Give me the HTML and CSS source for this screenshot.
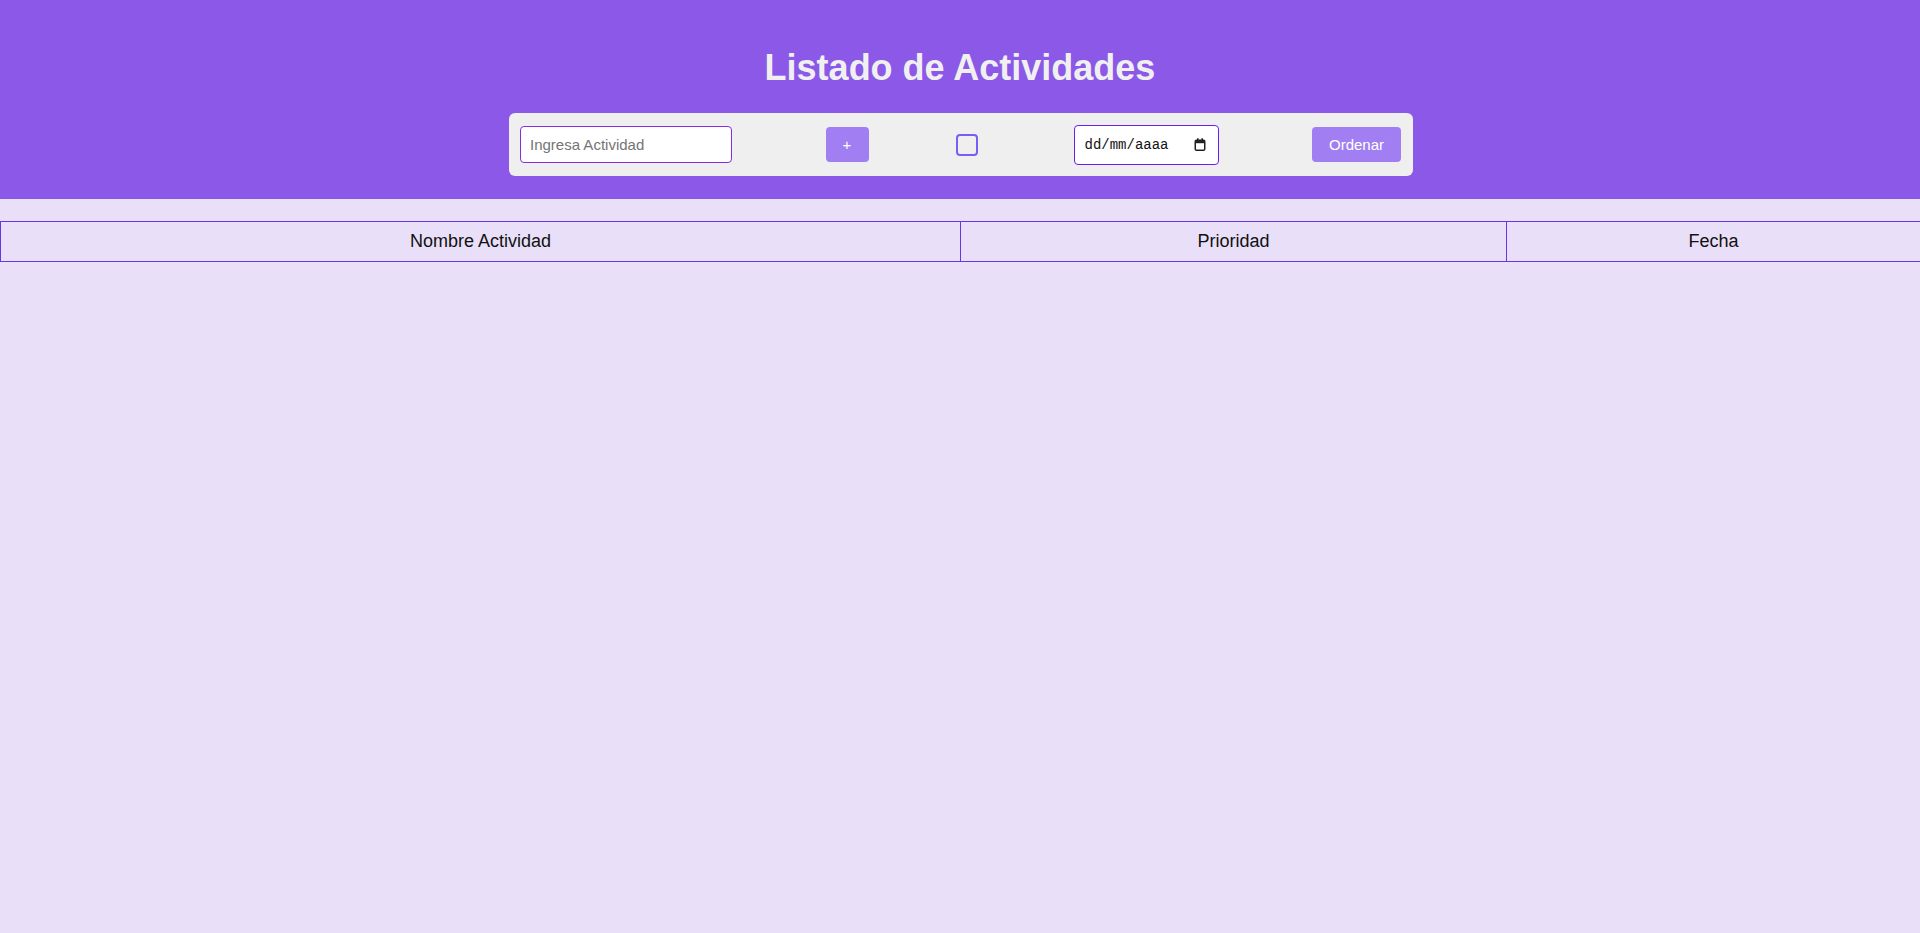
FILE: index.html
```html
<!DOCTYPE html>
<html lang="es">
<head>
<meta charset="utf-8">
<title>Listado de Actividades</title>
<link rel="stylesheet" href="styles.css">
</head>
<body>
<header class="header">
  <h1 class="title">Listado de Actividades</h1>
  <div class="toolbar">
    <input class="text-input" type="text" placeholder="Ingresa Actividad">
    <button class="btn btn-add" type="button">+</button>
    <input class="check" type="checkbox">
    <div class="date-field">
      <span class="date-text">dd/mm/aaaa</span>
      <svg class="cal-icon" width="12" height="13" viewBox="0 0 12 13" aria-hidden="true">
        <rect x="1.25" y="2.25" width="9.5" height="10" rx="1.2" fill="none" stroke="#222" stroke-width="1.5"/>
        <rect x="1" y="2" width="10" height="3.2" fill="#222"/>
        <rect x="3" y="0.3" width="1.6" height="2.5" fill="#222"/>
        <rect x="7.4" y="0.3" width="1.6" height="2.5" fill="#222"/>
      </svg>
    </div>
    <button class="btn btn-sort" type="button">Ordenar</button>
  </div>
</header>
<main class="content">
  <table class="activity-table">
    <thead>
      <tr>
        <th class="col-name">Nombre Actividad</th>
        <th class="col-prio">Prioridad</th>
        <th class="col-date">Fecha</th>
      </tr>
    </thead>
    <tbody></tbody>
  </table>
</main>
</body>
</html>
```
FILE: styles.css
```css
html, body {
  margin: 0;
  padding: 0;
  background: #e9dff8;
  font-family: "Liberation Sans", Arial, sans-serif;
  min-height: 100%;
}

.header {
  background: #8b58e7;
  display: flex;
  flex-direction: column;
  align-items: center;
  padding: 47px 0 23px;
}

.title {
  margin: 0 0 25px;
  font-size: 36px;
  font-weight: bold;
  line-height: 41px;
  color: #f0f0f0;
}

.toolbar {
  box-sizing: border-box;
  width: 904px;
  height: 63px;
  margin-left: 2px;
  background: #efefef;
  border-radius: 6px;
  padding: 0 12px 0 11px;
  display: flex;
  justify-content: space-between;
  align-items: center;
}

.text-input {
  box-sizing: border-box;
  width: 212px;
  height: 37px;
  margin: 0;
  border: 1px solid #8a2be2;
  border-radius: 4px;
  padding: 0 9px;
  font-family: "Liberation Sans", Arial, sans-serif;
  font-size: 15px;
  background: #fff;
  outline: none;
}

.text-input::placeholder {
  color: #757575;
}

.btn {
  box-sizing: border-box;
  height: 35px;
  margin: 0;
  border: none;
  border-radius: 4px;
  background: #a17ff2;
  color: #fff;
  font-family: "Liberation Sans", Arial, sans-serif;
  font-size: 15px;
  padding: 0;
  cursor: pointer;
}

.btn-add {
  width: 43px;
}

.btn-sort {
  width: 89px;
}

.check {
  appearance: none;
  -webkit-appearance: none;
  box-sizing: border-box;
  width: 22px;
  height: 22px;
  margin: 0 2px 0 -6px;
  border: 2px solid #7b5cf5;
  border-radius: 4px;
  background: transparent;
}

.date-field {
  box-sizing: border-box;
  width: 145px;
  height: 40px;
  border: 1px solid #6a1ff0;
  border-radius: 4px;
  background: #fff;
  display: flex;
  align-items: center;
  justify-content: space-between;
  padding: 0 12px 0 10px;
}

.date-text {
  font-family: "Liberation Mono", "DejaVu Sans Mono", monospace;
  font-size: 14px;
  color: #111;
}

.cal-icon {
  display: block;
}

.content {
  padding-top: 22px;
  overflow-x: hidden;
}

.activity-table {
  width: calc(100% + 1px);
  border-collapse: collapse;
  table-layout: fixed;
}

.activity-table th {
  box-sizing: border-box;
  border: 1px solid #6637e6;
  padding: 9px;
  font-size: 18px;
  line-height: 21px;
  font-weight: normal;
  color: #111;
  text-align: center;
}

.col-name {
  width: 960px;
}

.col-prio {
  width: 546px;
}

.col-date {
  width: auto;
}
```
